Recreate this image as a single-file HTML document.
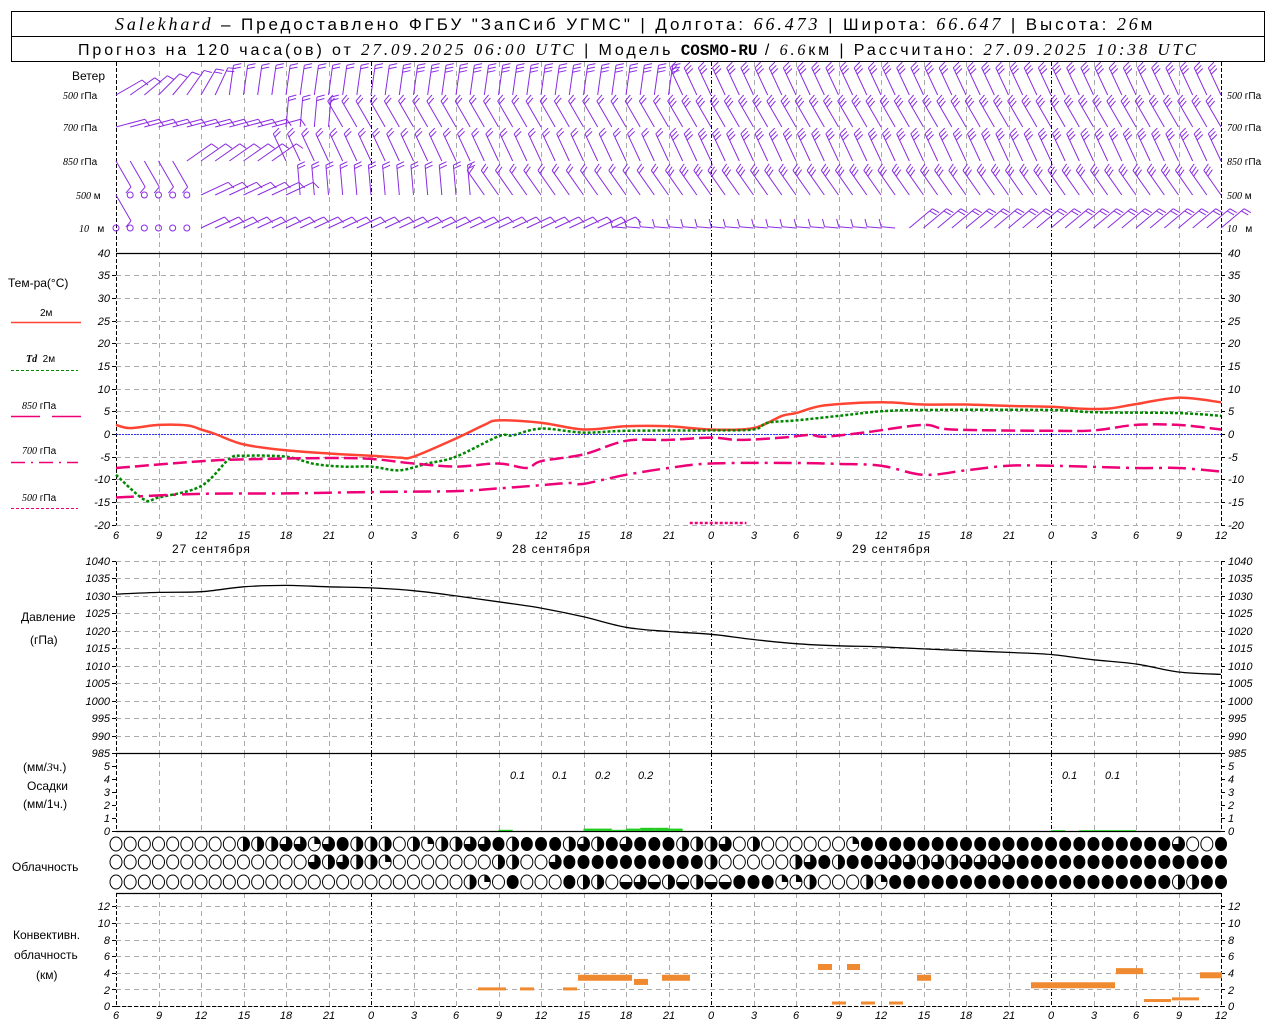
<!DOCTYPE html>
<html><head><meta charset="utf-8"><style>
html,body{margin:0;padding:0;background:#fff;width:1280px;height:1024px;overflow:hidden}
svg{display:block}
text{font-family:"Liberation Sans","DejaVu Sans",sans-serif;fill:#000}
.ax{font-family:"Liberation Serif",serif;font-style:italic;font-size:11px}
.lb{font-size:12px}
.it{font-family:"Liberation Serif",serif;font-style:italic}
</style></head><body>
<svg id="s" width="1280" height="1024" viewBox="0 0 1280 1024" xmlns="http://www.w3.org/2000/svg">
<rect x="11.5" y="11.5" width="1253" height="50" fill="none" stroke="#000"/>
<line x1="11" y1="36.5" x2="1265" y2="36.5" stroke="#000"/>
<text x="115" y="30" font-size="17" letter-spacing="2.9"><tspan class="it" font-size="18">Salekhard</tspan> – Предоставлено ФГБУ "ЗапСиб УГМС" | Долгота: <tspan class="it" font-size="18">66.473</tspan> | Широта: <tspan class="it" font-size="18">66.647</tspan> | Высота: <tspan class="it" font-size="18">26</tspan>м</text>
<text x="78" y="55" font-size="16" letter-spacing="2.9">Прогноз на 120 часа(ов) от <tspan class="it" font-size="17">27.09.2025 06:00 UTC</tspan> | Модель <tspan font-family="Liberation Mono" font-weight="bold" letter-spacing="0">COSMO-RU</tspan> / <tspan class="it">6.6</tspan>км | Рассчитано: <tspan class="it" font-size="17">27.09.2025 10:38 UTC</tspan></text>

<g class="lb">
<text x="72" y="80">Ветер</text>
<text x="63" y="99" font-size="10"><tspan class="it">500</tspan> гПа</text>
<text x="63" y="131" font-size="10"><tspan class="it">700</tspan> гПа</text>
<text x="63" y="165" font-size="10"><tspan class="it">850</tspan> гПа</text>
<text x="76" y="199" font-size="10"><tspan class="it">500</tspan> м</text>
<text x="79" y="232" font-size="10"><tspan class="it">10</tspan>&#160;&#160; м</text>
<text x="1227" y="99" font-size="10"><tspan class="it">500</tspan> гПа</text>
<text x="1227" y="131" font-size="10"><tspan class="it">700</tspan> гПа</text>
<text x="1227" y="165" font-size="10"><tspan class="it">850</tspan> гПа</text>
<text x="1227" y="199" font-size="10"><tspan class="it">500</tspan> м</text>
<text x="1227" y="232" font-size="10"><tspan class="it">10</tspan>&#160;&#160; м</text>
<text x="8" y="287">Тем-ра(°C)</text>
<text x="40" y="316" font-size="10">2м</text>
<text x="26" y="362" font-size="10"><tspan class="it" font-weight="bold">Td</tspan>&#160; 2м</text>
<text x="22" y="409" font-size="10"><tspan class="it">850</tspan> гПа</text>
<text x="22" y="454" font-size="10"><tspan class="it">700</tspan> гПа</text>
<text x="22" y="501" font-size="10"><tspan class="it">500</tspan> гПа</text>
<text x="21" y="621">Давление</text>
<text x="30" y="644">(гПа)</text>
<text x="23" y="771">(мм/<tspan class="it">3</tspan>ч.)</text>
<text x="27" y="790">Осадки</text>
<text x="23" y="808">(мм/1ч.)</text>
<text x="12" y="871">Облачность</text>
<text x="13" y="939">Конвективн.</text>
<text x="14" y="959">облачность</text>
<text x="36" y="979">(км)</text>
<text x="172" y="553" letter-spacing="1">27 сентября</text>
<text x="512" y="553" letter-spacing="1">28 сентября</text>
<text x="852" y="553" letter-spacing="1">29 сентября</text>
</g>
<g font-size="12" class="ax">
<text x="510" y="779">0.1</text><text x="552" y="779">0.1</text><text x="595" y="779">0.2</text><text x="638" y="779">0.2</text>
<text x="1062" y="779">0.1</text><text x="1105" y="779">0.1</text>
</g>
<g class="ax" font-size="13" text-anchor="middle">
<text x="116" y="539">6</text><text x="159" y="539">9</text><text x="201" y="539">12</text><text x="244" y="539">15</text><text x="286" y="539">18</text><text x="329" y="539">21</text><text x="371" y="539">0</text><text x="414" y="539">3</text><text x="456" y="539">6</text><text x="499" y="539">9</text><text x="541" y="539">12</text><text x="584" y="539">15</text><text x="626" y="539">18</text><text x="669" y="539">21</text><text x="711" y="539">0</text><text x="754" y="539">3</text><text x="796" y="539">6</text><text x="839" y="539">9</text><text x="881" y="539">12</text><text x="924" y="539">15</text><text x="966" y="539">18</text><text x="1009" y="539">21</text><text x="1051" y="539">0</text><text x="1094" y="539">3</text><text x="1136" y="539">6</text><text x="1179" y="539">9</text><text x="1221" y="539">12</text>
</g>
<g class="ax" font-size="13" text-anchor="middle">
<text x="116" y="1019">6</text><text x="159" y="1019">9</text><text x="201" y="1019">12</text><text x="244" y="1019">15</text><text x="286" y="1019">18</text><text x="329" y="1019">21</text><text x="371" y="1019">0</text><text x="414" y="1019">3</text><text x="456" y="1019">6</text><text x="499" y="1019">9</text><text x="541" y="1019">12</text><text x="584" y="1019">15</text><text x="626" y="1019">18</text><text x="669" y="1019">21</text><text x="711" y="1019">0</text><text x="754" y="1019">3</text><text x="796" y="1019">6</text><text x="839" y="1019">9</text><text x="881" y="1019">12</text><text x="924" y="1019">15</text><text x="966" y="1019">18</text><text x="1009" y="1019">21</text><text x="1051" y="1019">0</text><text x="1094" y="1019">3</text><text x="1136" y="1019">6</text><text x="1179" y="1019">9</text><text x="1221" y="1019">12</text>
</g>
<g class="ax" font-size="9">
<g text-anchor="end">
<text x="110" y="257">40</text><text x="110" y="279">35</text><text x="110" y="302">30</text><text x="110" y="325">25</text><text x="110" y="347">20</text><text x="110" y="370">15</text><text x="110" y="393">10</text><text x="110" y="415">5</text><text x="110" y="438">0</text><text x="110" y="461">-5</text><text x="110" y="483">-10</text><text x="110" y="506">-15</text><text x="110" y="529">-20</text>
<text x="110" y="565">1040</text><text x="110" y="582">1035</text><text x="110" y="600">1030</text><text x="110" y="617">1025</text><text x="110" y="635">1020</text><text x="110" y="652">1015</text><text x="110" y="670">1010</text><text x="110" y="687">1005</text><text x="110" y="705">1000</text><text x="110" y="722">995</text><text x="110" y="740">990</text><text x="110" y="757">985</text>
<text x="110" y="770">5</text><text x="110" y="783">4</text><text x="110" y="796">3</text><text x="110" y="809">2</text><text x="110" y="822">1</text><text x="110" y="835">0</text>
<text x="110" y="910">12</text><text x="110" y="927">10</text><text x="110" y="944">8</text><text x="110" y="960">6</text><text x="110" y="977">4</text><text x="110" y="994">2</text><text x="110" y="1010">0</text>
</g>
<text x="1228" y="257">40</text><text x="1228" y="279">35</text><text x="1228" y="302">30</text><text x="1228" y="325">25</text><text x="1228" y="347">20</text><text x="1228" y="370">15</text><text x="1228" y="393">10</text><text x="1228" y="415">5</text><text x="1228" y="438">0</text><text x="1228" y="461">-5</text><text x="1228" y="483">-10</text><text x="1228" y="506">-15</text><text x="1228" y="529">-20</text>
<text x="1228" y="565">1040</text><text x="1228" y="582">1035</text><text x="1228" y="600">1030</text><text x="1228" y="617">1025</text><text x="1228" y="635">1020</text><text x="1228" y="652">1015</text><text x="1228" y="670">1010</text><text x="1228" y="687">1005</text><text x="1228" y="705">1000</text><text x="1228" y="722">995</text><text x="1228" y="740">990</text><text x="1228" y="757">985</text>
<text x="1228" y="770">5</text><text x="1228" y="783">4</text><text x="1228" y="796">3</text><text x="1228" y="809">2</text><text x="1228" y="822">1</text><text x="1228" y="835">0</text>
<text x="1228" y="910">12</text><text x="1228" y="927">10</text><text x="1228" y="944">8</text><text x="1228" y="960">6</text><text x="1228" y="977">4</text><text x="1228" y="994">2</text><text x="1228" y="1010">0</text>
</g>
<g id="g"></g>
</svg>
<script>
var NS="http://www.w3.org/2000/svg",G=document.getElementById("g");
function el(t,a){var e=document.createElementNS(NS,t);for(var k in a)e.setAttribute(k,a[k]);G.appendChild(e);return e;}
function X(h){return 116+h*42.5/3;}
function ln(x1,y1,x2,y2,c,w,d){var a={x1:x1,y1:y1,x2:x2,y2:y2,stroke:c,"stroke-width":w||1};if(d)a["stroke-dasharray"]=d;el("line",a);}
var panels=[[62,253],[253,525],[561,753],[753,831],[893,1006]];
panels.forEach(function(p){for(var i=0;i<=26;i++){var x=Math.round(X(i*3))+.5;var day=(i*3+6)%24==0;
 if(i==0||i==26)ln(x,p[0],x,p[1],"#000",1,"4,2");else if(day)ln(x,p[0],x,p[1],"#000",1,"4,2,1,2");else ln(x,p[0],x,p[1],"#aaa",1,"5,4");}});
for(var t=-20;t<=35;t+=5){var y=Math.round(434-t*4.533)+.5;ln(116,y,1221,y,"#aaa",1,"5,4");ln(112,y,116,y,"#000");ln(1221,y,1225,y,"#000");}
for(var p=985;p<=1040;p+=5){var y=Math.round(561+(1040-p)*3.49)+.5;ln(116,y,1221,y,"#aaa",1,"5,4");ln(112,y,116,y,"#000");ln(1221,y,1225,y,"#000");}
for(var k=0;k<=12;k+=2){var y=Math.round(1006-k*8.3)+.5;ln(116,y,1221,y,"#aaa",1,"5,4");ln(112,y,116,y,"#000");ln(1221,y,1225,y,"#000");}
for(var k=0;k<=5;k++){var y=Math.round(831-k*13)+.5;ln(112,y,116,y,"#000");ln(1221,y,1225,y,"#000");}
[253.5,753.5,831.5,893.5].forEach(function(y){ln(116,y,1221,y,"#000",1.2);});
ln(116,1006.5,1221,1006.5,"#000",1,"4,2");
ln(116,434.5,1221,434.5,"#33f",1,"2,1");
ln(11,322.5,81,322.5,"#f43",1.5);ln(11,370.5,78,370.5,"#080",1,"3,2");
ln(11,416.5,40,416.5,"#e07",1.5);ln(52,416.5,81,416.5,"#e07",1.5);
ln(11,462.5,78,462.5,"#e07",1.5,"14,6,2,6");ln(11,508.5,78,508.5,"#e07",1,"3,2");
function curve(pts,fy,c,w,d){var P=pts.map(function(p){return [X(p[0]),fy(p[1])];});var s="M"+P[0][0]+","+P[0][1];
 for(var i=0;i<P.length-1;i++){var p0=P[i-1]||P[i],p1=P[i],p2=P[i+1],p3=P[i+2]||p2;
  s+="C"+(p1[0]+(p2[0]-p0[0])/6).toFixed(1)+","+(p1[1]+(p2[1]-p0[1])/6).toFixed(1)+" "+(p2[0]-(p3[0]-p1[0])/6).toFixed(1)+","+(p2[1]-(p3[1]-p1[1])/6).toFixed(1)+" "+p2[0].toFixed(1)+","+p2[1].toFixed(1);}
 var a={d:s,fill:"none",stroke:c,"stroke-width":w};if(d)a["stroke-dasharray"]=d;el("path",a);}
var TY=function(t){return 434-t*4.533;};
curve([[0,2],[1,1.3],[3,2],[5,1.9],[6,1],[7,0],[9,-2.3],[12,-3.6],[15,-4.3],[18,-4.8],[20,-5.2],[21,-5],[24,-1],[26,2],[27,3],[30,2.5],[33,1],[36,1.7],[39,1.7],[42,1],[45,1.3],[47,4],[48,4.6],[50,6.3],[54,7],[57,6.5],[60,6.5],[63,6.2],[66,6],[68,5.6],[70,5.6],[72,6.6],[75,8],[78,7]],TY,"#f43",2.5);
curve([[0,-9],[2,-14.5],[3,-14],[6,-11.5],[8,-5.5],[9,-4.8],[12,-5],[14,-6.6],[16,-7.2],[18,-7.2],[20,-8],[22,-6.5],[24,-5],[27,-0.5],[28,-0.3],[30,1.2],[33,0.3],[36,0.7],[42,0.8],[45,1],[46,2.5],[48,3],[51,4],[54,5],[57,5.3],[66,5.3],[69,4.8],[75,4.6],[78,4]],TY,"#080",2.5,"3,2");
curve([[0,-7.5],[6,-6],[9,-5.6],[15,-5.3],[18,-5.5],[21,-6.5],[24,-7.2],[27,-6.5],[29,-7.5],[30,-6],[33,-4.5],[36,-1.5],[39,-1.3],[42,-0.8],[44,-1.3],[47,-0.8],[49,-0.2],[50,-0.6],[53,0.4],[57,2],[59,1],[66,0.7],[69,0.8],[72,2],[75,2],[78,1]],TY,"#e07",2.5,"14,5");
curve([[0,-14],[6,-13.2],[12,-13.1],[18,-12.8],[24,-12.6],[27,-12],[30,-11.3],[32,-10.8],[33,-11],[36,-9],[39,-7.5],[42,-6.5],[48,-6.4],[51,-6.6],[54,-7],[57,-9],[60,-8],[63,-7],[66,-7],[72,-7.5],[75,-7.5],[78,-8.3]],TY,"#e07",2.5,"18,6,3,6");
ln(X(40.5),523,X(44.5),523,"#e07",2.5,"3,2");
curve([[0,1030.5],[3,1031],[6,1031.2],[9,1032.6],[12,1033],[15,1032.6],[18,1032.3],[21,1031.5],[24,1030],[27,1028.3],[30,1026.5],[33,1024],[36,1021],[39,1019.8],[42,1019],[45,1017.5],[48,1016.3],[51,1015.7],[54,1015.4],[57,1014.8],[60,1014.3],[63,1013.8],[66,1013.2],[69,1011.7],[72,1010.5],[75,1008.2],[78,1007.5]],function(p){return 561+(1040-p)*3.49;},"#000",1.3);
[[27,28,0.3],[33,35,0.6],[35,36,0.3],[36,37,0.6],[37,38,0.8],[38,39,0.8],[39,40,0.6],[66,67,0.2],[68,72,0.2]].forEach(function(b){el("rect",{x:X(b[0]),y:831-b[2]*4,width:X(b[1])-X(b[0]),height:b[2]*4,fill:"#2c2"});});
function cy(k){return 1006-k*8.3;}
[[478,506,2],[520,534,2],[563,577,2],[578,632,3.4],[634,648,2.9],[662,690,3.4],[818,832,4.7],[847,860,4.7],[832,846,0.3],[861,875,0.3],[889,903,0.3],[917,931,3.4],[1031,1115,2.5],[1116,1143,4.2],[1144,1171,0.6],[1172,1199,0.8],[1200,1222,3.7]].forEach(function(b){var thin=b[2]<2.2&&b[0]<600||b[2]<1;el("rect",{x:b[0],y:cy(b[2])-(thin?2:3),width:b[1]-b[0],height:thin?3:6,fill:"#f08a30"});});
var rows=[
"000000000222331342220212233424442324344422230200000014444444444444444444444300",
"000000000000003232210000000220034444444444200000234244333232333344444444444444",
"000000000000000000000000021040004220h3h2h2hh4441120002144444444444444444444224"];
rows.forEach(function(r,ri){var y=[844,862,882][ri];for(var h=0;h<79;h++){var c=r[h]||"4";var x=X(h),R=6;
 if(c=="4"){el("ellipse",{cx:x,cy:y,rx:R,ry:R+1,fill:"#000"});continue;}
 el("ellipse",{cx:x,cy:y,rx:R,ry:R+1,fill:"#fff",stroke:"#000","stroke-width":1});
 if(c=="2")el("path",{d:"M"+x+","+(y-R-1)+"A"+R+","+(R+1)+" 0 0 1 "+x+","+(y+R+1)+"Z",fill:"#000"});
 if(c=="h")el("path",{d:"M"+(x-R)+","+y+"A"+R+","+(R+1)+" 0 0 0 "+(x+R)+","+y+"Z",fill:"#000"});
 if(c=="1")el("path",{d:"M"+x+","+y+"L"+x+","+(y-R-1)+"A"+R+","+(R+1)+" 0 0 1 "+(x+R)+","+y+"Z",fill:"#000"});
 if(c=="3")el("path",{d:"M"+x+","+y+"L"+x+","+(y-R-1)+"A"+R+","+(R+1)+" 0 1 1 "+(x-R)+","+y+"Z",fill:"#000"});
 if(c=="2")ln(x,y-R-1,x,y+R+1,"#000",1);
}});
var P="#8a2be2";
function barb(x,y,ang,len,n){var a=ang*Math.PI/180,dx=Math.sin(a),dy=-Math.cos(a);var tx=x+dx*len,ty=y+dy*len;ln(x,y,tx,ty,P,1);
 var fa=a+70*Math.PI/180;for(var i=0;i<n;i++){var bx=tx-dx*i*3.5,by=ty-dy*i*3.5;ln(bx,by,bx+Math.sin(fa)*8,by-Math.cos(fa)*8,P,1);}}
var W=[
 [95,function(h){return h<8?60-h*5:h<40?8:-25;},function(h){return h<6?1:h<20?2:3;}],
 [127,function(h){return h<12?75:h<16?5:-30;},function(h){return h<12?1:h<40?2:3;}],
 [161,function(h){return h<5?150:h<12?55:-25;},function(h){return h<12?1:h<40?2:3;}],
 [195,function(h){return h==0?150:h<13?65:h<26?-5:-35;},function(h){return h<13?1:h<40?2:3;}],
 [228,function(h){return h<36?65:h<56?-85:50;},function(h){return h<36?1:h<56?1:2;}]];
W.forEach(function(r,ri){for(var h=0;h<=78;h++){var x=X(h);
 if(ri==3&&h>=1&&h<=5||ri==4&&h<=5){el("circle",{cx:x,cy:r[0],r:3,fill:"none",stroke:P});continue;}
 var a=r[1](h),L=30;if(ri==4&&h>=36&&h<56)L=14;if(ri==4&&h<36)L=26;
 barb(x,r[0],a,L,r[2](h));}});
</script>
</body></html>
